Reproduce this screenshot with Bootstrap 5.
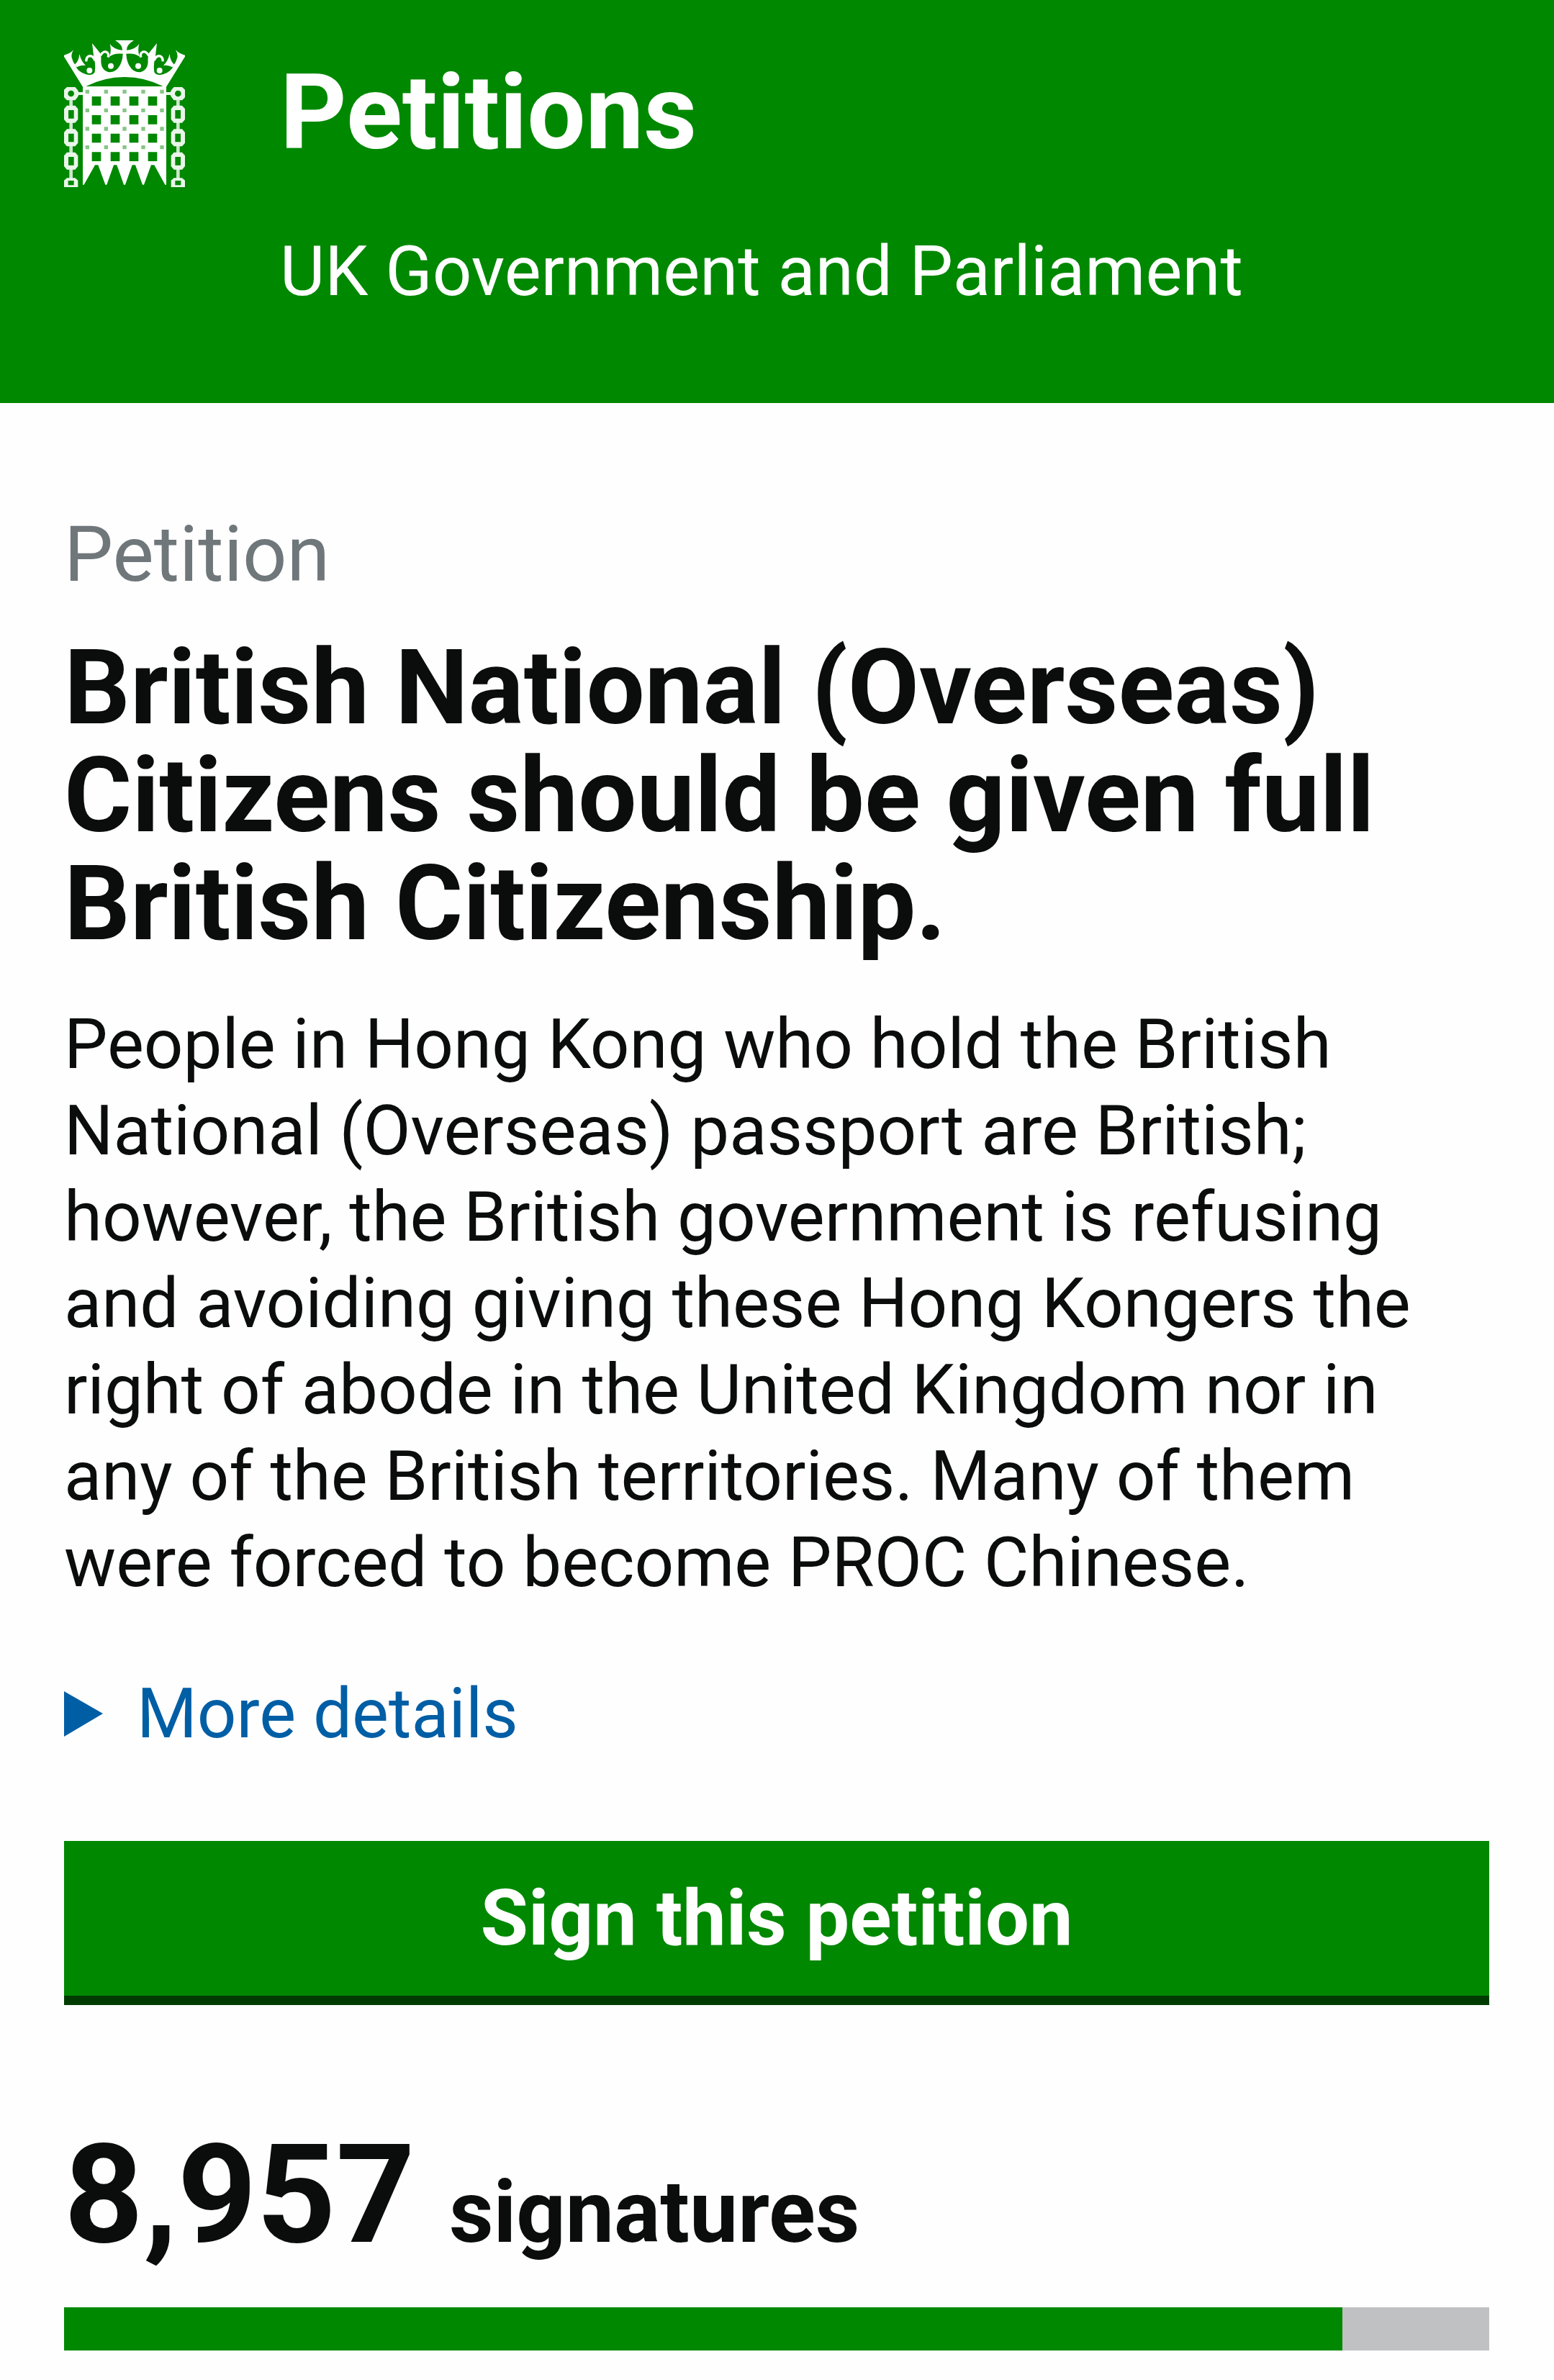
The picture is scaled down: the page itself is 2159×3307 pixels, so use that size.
<!DOCTYPE html>
<html lang="en">
<head>
<meta charset="utf-8">
<meta name="viewport" content="width=device-width, initial-scale=1">
<title>British National (Overseas) Citizens should be given full British Citizenship. - Petitions</title>
<link href="https://cdn.jsdelivr.net/npm/bootstrap@5.3.0/dist/css/bootstrap.min.css" rel="stylesheet">
<style>
  :root { --green: #008800; --ink: #0b0c0c; }
  body { font-family: Roboto, "Noto Sans", sans-serif; font-size: 96px; line-height: 120px; color: var(--ink); background: #fefefe; }
  .gutter { padding-left: 89px; padding-right: 90px; }
  .site-header { background: var(--green); padding-top: 56px; padding-bottom: 123px; gap: 132px; }
  .crest { width: 168px; height: 204px; }
  .site-titles { padding-top: 26px; gap: 85px; }
  .site-name { font-size: 144px; line-height: 150px; }
  .petition-main { padding-top: 150px; padding-bottom: 41px; }
  .kicker { font-size: 108px; color: #6f777b; margin-bottom: 51px; }
  .petition-title { font-size: 144px; line-height: 150px; margin-bottom: 60px; }
  .petition-text { margin-bottom: 90px; }
  .more { color: #005ea5; margin-bottom: 117px; }
  .more summary { gap: 47px; list-style: none; }
  .more summary::-webkit-details-marker { display: none; }
  .arrow { width: 54px; height: 63px; }
  .btn-sign { --bs-btn-color: #fff; --bs-btn-bg: var(--green); --bs-btn-hover-color: #fff; --bs-btn-hover-bg: #007300;
    font-size: 108px; line-height: 120px; padding: 47px 0 48px; border: 0; border-bottom: 13px solid #003c00; margin-bottom: 168px; }
  .sig-count { gap: 47px; margin-bottom: 60px; }
  .sig-number { font-size: 192px; line-height: 192px; }
  .sig-label { font-size: 120px; line-height: 120px; }
  .sig-bar { height: 60px; --bs-progress-bg: #bfc1c3; --bs-progress-bar-bg: var(--green); }
</style>
</head>
<body>
<header class="site-header gutter d-flex align-items-start text-white">
  <svg class="crest flex-shrink-0" viewBox="57 48 504 612" role="img" aria-label="Parliament portcullis">
    <defs>
      <g id="half-crown">
        <path fill="#fff" d="M57 110Q82 104 96 88Q86 106 89 120Q94 140 105 153Q112 178 148 190Q178 196 185 180Q190 150 181 120L174 60L206 100Q213 112 211 140Q214 172 240 180Q270 184 285 160Q300 140 302 106L299 82Q298 66 270 48H310V245H137L57 116Z"/>
        <path fill="#fff" d="M121 105Q119 134 101 150L110 160Q126 150 147 153Q128 135 121 105Z"/>
        <path fill="#fff" d="M248 63Q262 86 303 90V104Q266 100 246 116Q256 90 248 63Z"/>
        <path fill="none" stroke="#fff" stroke-width="10" d="M186 132Q177 110 160 114Q148 120 150 136M208 112Q222 88 237 99Q245 106 240 119"/>
        <circle fill="#fff" cx="163" cy="174" r="12"/>
        <circle fill="#fff" cx="252" cy="155" r="12"/>
      </g>
      <path id="chain-link" fill="#eaf6ea" fill-rule="evenodd" d="M69 320H103L115 334V378L103 392H69L57 378V334ZM75 339V374H98V339Z"/>
      <g id="chain">
        <path fill="#eaf6ea" fill-rule="evenodd" d="M69 243H103L113 254L118 264H136V276H118L113 286L103 298H69L57 286V254ZM86 257A13 13 0 1 0 86 283A13 13 0 1 0 86 257Z"/>
        <path fill="#cce8cc" d="M79 296H93V324H79ZM79 390H93V424H79ZM79 486H93V520H79ZM79 583H93V628H79Z"/>
        <use href="#chain-link"/>
        <use href="#chain-link" y="98"/>
        <use href="#chain-link" y="195"/>
        <path fill="#eaf6ea" fill-rule="evenodd" d="M69 622H103L115 632V660H57V632ZM74 633V652H98V633Z"/>
      </g>
      <g id="grid-row">
        <path fill="#080" d="M173 282H211V320H173ZM251 282H289V320H251ZM329 282H367V320H329ZM407 282H445V320H407Z"/>
        <path fill="#86c586" d="M146 254H162V270H146ZM224 254H240V270H224ZM301 254H317V270H301ZM379 254H395V270H379ZM457 254H473V270H457Z"/>
      </g>
    </defs>
    <use href="#half-crown"/>
    <use href="#half-crown" transform="matrix(-1 0 0 1 618 0)"/>
    <path fill="#080" d="M148 240Q225 201 309 201T470 240Z"/>
    <path fill="#fff" d="M135 243H483V650H478L433 568H420L390 650H384L354 568H341L312 650H306L277 568H264L235 650H229L199 568H186L140 650H135Z"/>
    <use href="#grid-row"/>
    <use href="#grid-row" y="78"/>
    <use href="#grid-row" y="155"/>
    <use href="#grid-row" y="232"/>
    <use href="#chain"/>
    <use href="#chain" transform="matrix(-1 0 0 1 618 0)"/>
  </svg>
  <div class="site-titles d-flex flex-column">
    <a href="#" class="site-name fw-bold text-white text-decoration-none">Petitions</a>
    <span>UK Government and Parliament</span>
  </div>
</header>

<main class="petition-main gutter">
  <p class="kicker">Petition</p>
  <h1 class="petition-title fw-bold">British National (Overseas) Citizens should be given full British Citizenship.</h1>
  <p class="petition-text">People in Hong Kong who hold the British National (Overseas) passport are British; however, the British government is refusing and avoiding giving these Hong Kongers the right of abode in the United Kingdom nor in any of the British territories. Many of them were forced to become PROC Chinese.</p>
  <details class="more">
    <summary class="d-flex align-items-center">
      <svg class="arrow flex-shrink-0" viewBox="0 0 54 63" aria-hidden="true"><path fill="currentColor" d="M0 0L54 31L0 63Z"/></svg>
      <span>More details</span>
    </summary>
  </details>
  <button type="button" class="btn btn-sign d-block w-100 rounded-0 fw-bold">Sign this petition</button>
  <p class="sig-count d-flex align-items-baseline fw-bold">
    <span class="sig-number">8,957</span>
    <span class="sig-label">signatures</span>
  </p>
  <div class="progress sig-bar rounded-0" role="progressbar" aria-label="Signatures out of 10,000" aria-valuenow="8957" aria-valuemin="0" aria-valuemax="10000">
    <div class="progress-bar" style="width: 89.7%"></div>
  </div>
</main>
<script src="https://cdn.jsdelivr.net/npm/bootstrap@5.3.0/dist/js/bootstrap.bundle.min.js"></script>
</body>
</html>
